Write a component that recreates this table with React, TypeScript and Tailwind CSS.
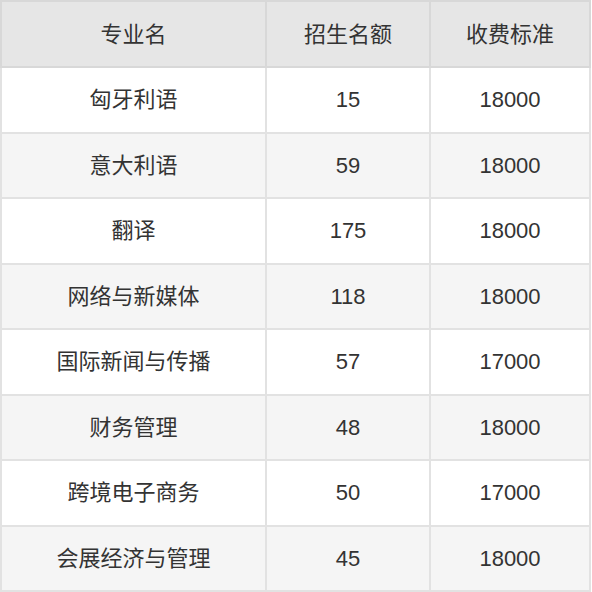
const rows: [string, string, string][] = [
  ['匈牙利语', '15', '18000'],
  ['意大利语', '59', '18000'],
  ['翻译', '175', '18000'],
  ['网络与新媒体', '118', '18000'],
  ['国际新闻与传播', '57', '17000'],
  ['财务管理', '48', '18000'],
  ['跨境电子商务', '50', '17000'],
  ['会展经济与管理', '45', '18000'],
];

const font = { fontFamily: '"Liberation Sans", "Noto Sans CJK SC", sans-serif' };

export default function App() {
  return (
    <div className="w-[592px] h-[592px] bg-white" style={font}>
      <table className="w-[591px] border-collapse border-2 border-[#dcdcdc] text-[22px] text-[#333]">
        <colgroup>
          <col className="w-[265px]" />
          <col className="w-[164px]" />
          <col />
        </colgroup>
        <thead>
          <tr className="h-[66px] bg-[#e6e6e6]">
            <th className="border-2 border-[#d8d8d8] font-normal text-center">专业名</th>
            <th className="border-2 border-[#d8d8d8] font-normal text-center">招生名额</th>
            <th className="border-2 border-[#d8d8d8] font-normal text-center">收费标准</th>
          </tr>
        </thead>
        <tbody>
          {rows.map(([name, quota, fee], i) => (
            <tr key={name} className={`h-[65.5px] ${i % 2 === 1 ? 'bg-[#f5f5f5]' : 'bg-white'}`}>
              <td className="border-2 border-[#e2e2e2] text-center">{name}</td>
              <td className="border-2 border-[#e2e2e2] text-center">{quota}</td>
              <td className="border-2 border-[#e2e2e2] text-center">{fee}</td>
            </tr>
          ))}
        </tbody>
      </table>
    </div>
  );
}
